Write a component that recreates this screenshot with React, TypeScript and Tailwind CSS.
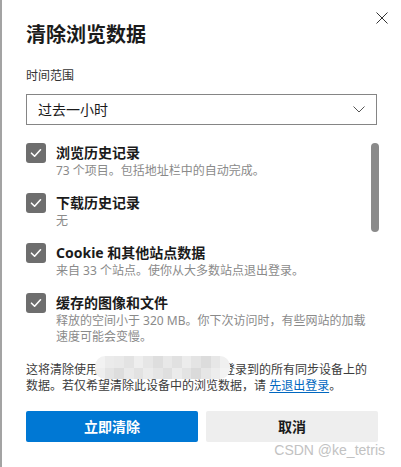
import type { ReactNode } from 'react';

const mosaic = [
  'bg-[#f2f2f2]', 'bg-[#ebebeb]', 'bg-[#e9e9e9]', 'bg-[#e3e3e3]', 'bg-[#eeeeee]', 'bg-[#e6e6e6]', 'bg-[#dedede]',
  'bg-[#e8e8e8]', 'bg-[#e1e1e1]', 'bg-[#ececec]', 'bg-[#e4e4e4]', 'bg-[#dcdcdc]', 'bg-[#e7e7e7]', 'bg-[#f0f0f0]',
  'bg-[#eeeeee]', 'bg-[#e4e4e4]', 'bg-[#dddddd]', 'bg-[#e9e9e9]', 'bg-[#e2e2e2]', 'bg-[#ebebeb]', 'bg-[#e5e5e5]',
  'bg-[#dfdfdf]', 'bg-[#ebebeb]', 'bg-[#e3e3e3]', 'bg-[#dadada]', 'bg-[#e6e6e6]', 'bg-[#ededed]', 'bg-[#f3f3f3]',
];

function Checkbox() {
  return (
    <span className="flex h-5 w-5 shrink-0 items-center justify-center rounded-[3px] bg-[#6e6e6e]">
      <svg width="14" height="14" viewBox="0 0 14 14" fill="none">
        <path d="M2.5 7.2 L5.6 10.2 L11.5 3.8" stroke="white" strokeWidth="1.6" strokeLinecap="round" strokeLinejoin="round" />
      </svg>
    </span>
  );
}

function Item({ label, sub }: { label: string; sub: ReactNode }) {
  return (
    <div className="flex gap-[10px]">
      <Checkbox />
      <div className="w-[312px]">
        <div className="text-[14px] leading-[20px] font-bold text-[#1b1b1b]">{label}</div>
        <div className="text-[12px] leading-[16px] text-[#8a8a8a]">{sub}</div>
      </div>
    </div>
  );
}

export default function App() {
  return (
    <div className="relative h-[467px] w-[401px] overflow-hidden border-l-2 border-[#a3a3a3] bg-white pr-[23px] pl-6 font-['Noto_Sans','Noto_Sans_CJK_SC',sans-serif]">
      <button className="absolute top-[12px] right-[13px]" aria-label="关闭">
        <svg width="12" height="12" viewBox="0 0 12 12" fill="none">
          <path d="M0.5 0.5 L11.5 11.5 M11.5 0.5 L0.5 11.5" stroke="#333" strokeWidth="1" />
        </svg>
      </button>

      <h1 className="pt-[21px] text-[20px] leading-[28px] font-bold text-[#1b1b1b]">清除浏览数据</h1>

      <div className="mt-[19px] text-[12px] leading-[16px] text-[#333]">时间范围</div>

      <div className="mt-[10px] mr-px flex h-[31px] items-center justify-between border border-[#858585] pr-[11px] pl-[11px]">
        <span className="text-[14px] leading-[20px] text-[#1b1b1b]">过去一小时</span>
        <svg width="12" height="7" viewBox="0 0 12 7" fill="none">
          <path d="M0.5 0.5 L6 6 L11.5 0.5" stroke="#555" strokeWidth="1" />
        </svg>
      </div>

      <div className="mt-[18px] flex justify-between">
        <div className="flex flex-col gap-[14px]">
          <Item label="浏览历史记录" sub="73 个项目。包括地址栏中的自动完成。" />
          <Item label="下载历史记录" sub="无" />
          <Item label="Cookie 和其他站点数据" sub="来自 33 个站点。使你从大多数站点退出登录。" />
          <Item label="缓存的图像和文件" sub="释放的空间小于 320 MB。你下次访问时，有些网站的加载速度可能会变慢。" />
        </div>
        <div className="mr-[-1px] w-2">
          <div className="h-[89px] w-2 rounded-full bg-[#8a8a8a]" />
        </div>
      </div>

      <p className="mt-[17px] text-[12px] leading-[16px] text-[#3c3c3c]">
        这将清除使用
        <span className="relative inline-block h-[16px] w-[125px] align-top">
          <span className="absolute top-[-6px] left-[-3px] grid h-[23px] w-[135px] grid-cols-[repeat(14,1fr)] overflow-hidden rounded-[10px] blur-[0.6px]">
            {mosaic.map((c, i) => (
              <span key={i} className={c} />
            ))}
          </span>
        </span>
        登录到的所有同步设备上的数据。若仅希望清除此设备中的浏览数据，请{' '}
        <a href="#" className="text-[#0067c0] underline underline-offset-2">先退出登录</a>。
      </p>

      <div className="mt-[17px] grid grid-cols-2 gap-2">
        <button className="h-[31px] rounded-[2px] bg-[#0078d4] text-[14px] font-bold text-white">立即清除</button>
        <button className="h-[31px] rounded-[2px] bg-[#eeeeee] text-[14px] font-bold text-[#1b1b1b]">取消</button>
      </div>

      <span className="absolute right-[16px] bottom-[9px] font-['Liberation_Sans',sans-serif] text-[14px] leading-[16px] text-[#c2c2c2]">
        CSDN @ke_tetris
      </span>
    </div>
  );
}
